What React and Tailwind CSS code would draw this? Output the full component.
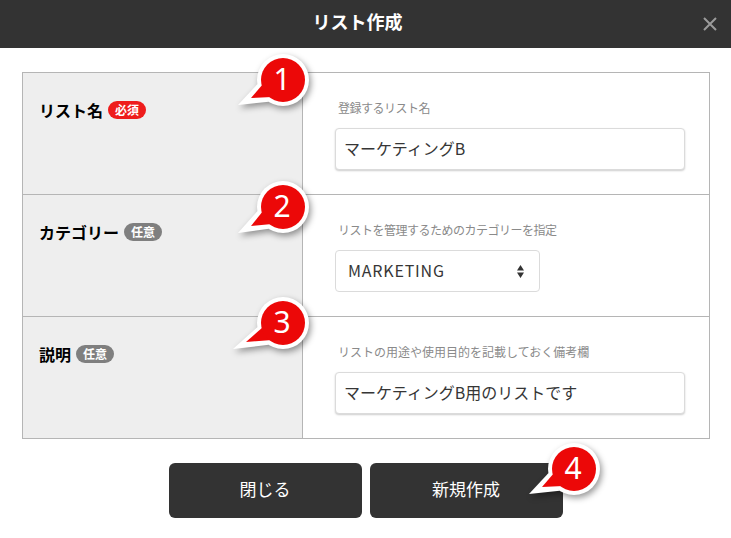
const font = "font-['Noto_Sans_CJK_JP','Noto_Sans',sans-serif]";

function Badge({ children, red }) {
  return (
    <span className={`ml-[5px] inline-flex h-[18px] w-[38px] items-center justify-center rounded-full text-[12px] font-bold leading-none text-white ${red ? "bg-[#ee1c1c]" : "bg-[#7f7f7f]"}`}>
      {children}
    </span>
  );
}

function Callout({ n, cx, cy, tx, ty }) {
  const left = Math.min(cx - 40, tx - 10);
  const top = cy - 40;
  const w = cx + 40 - left;
  const h = Math.max(cy + 40, ty + 15) - top;
  const x = cx - left;
  const y = cy - top;
  const a = tx - left;
  const b = ty - top;
  const tail = (r) => `M${x - r * 0.98} ${y + r * 0.15} L${a} ${b} L${x - r * 0.55} ${y + r * 0.84} Z`;
  return (
    <div className="absolute" style={{ left, top, width: w, height: h }}>
      <svg width={w} height={h} className="absolute inset-0 drop-shadow-[2px_3px_3px_rgba(0,0,0,0.4)]">
        <circle cx={x} cy={y} r={26} fill="#fff" />
        <path d={tail(26)} fill="#fff" />
        <path d={`M${x - 20} ${y + 4} L${a + 13} ${b - 7} L${x - 11} ${y + 17} Z`} fill="#ec0808" />
        <circle cx={x} cy={y} r={22} fill="#ec0808" />
      </svg>
      <span
        className="absolute flex h-[44px] w-[44px] items-center justify-center font-['Noto_Sans','Open_Sans',sans-serif] text-[30px] leading-none text-white"
        style={{ left: x - 23, top: y - 23 }}
      >
        {n}
      </span>
    </div>
  );
}

function Row({ label, badge, red, hint, hintClass, children, last }) {
  return (
    <div className={`flex ${last ? "h-[121px]" : "h-[122px] border-b border-[#b5b5b5]"}`}>
      <div className="flex w-[280px] shrink-0 items-start border-r border-[#b5b5b5] bg-[#eeeeee] pl-[16px] pt-[27px]">
        <div className="flex h-[20px] items-center text-[16px] font-bold leading-none text-black">
          <span>{label}</span>
          <Badge red={red}>{badge}</Badge>
        </div>
      </div>
      <div className="flex-1 pl-[32px] pr-[24px] pt-[27px]">
        <div className={`h-[16px] pl-[3px] text-[12px] leading-[16px] text-[#8a8a8a] ${hintClass}`}>{hint}</div>
        {children}
      </div>
    </div>
  );
}

function TextBox({ value }) {
  return (
    <div className="mt-[12px] flex h-[42px] w-[350px] items-center rounded-[4px] border border-[#dbdbdb] bg-white pb-[2px] pl-[8px] text-[16px] text-[#363636] shadow-[0_1px_2px_rgba(0,0,0,0.2)]">
      {value}
    </div>
  );
}

export default function App() {
  return (
    <div className={`relative h-[538px] w-[731px] overflow-hidden bg-white ${font}`}>
      <header className="relative flex h-[48px] items-center justify-center bg-[#333333] pb-[6px] pr-[16px] text-[18px] font-bold text-white">
        リスト作成
        <svg className="absolute left-[703px] top-[17px]" width="14" height="14" viewBox="0 0 14 14" fill="none" stroke="#9b9b9b" strokeWidth="2">
          <path d="M1 1 L13 13 M13 1 L1 13" />
        </svg>
      </header>

      <main className="px-[22px] pt-[24px]">
        <div className="w-[688px] border border-[#b5b5b5]">
          <Row label="リスト名" badge="必須" red hint="登録するリスト名" hintClass="tracking-[-0.5px]">
            <TextBox value="マーケティングB" />
          </Row>
          <Row label="カテゴリー" badge="任意" hint="リストを管理するためのカテゴリーを指定" hintClass="tracking-[-0.5px]">
            <div className="mt-[12px] flex h-[42px] w-[205px] items-center justify-between rounded-[4px] border border-[#dbdbdb] bg-white pb-[3px] pl-[12px] pr-[15px] text-[16px] tracking-[0.8px] text-[#363636]">
              <span>MARKETING</span>
              <svg className="mt-[3px]" width="7" height="13" viewBox="0 0 7 13" fill="#333">
                <path d="M3.5 0 L7 5.5 L0 5.5 Z M3.5 13 L0 7.5 L7 7.5 Z" />
              </svg>
            </div>
          </Row>
          <Row last label="説明" badge="任意" hint="リストの用途や使用目的を記載しておく備考欄" hintClass="">
            <TextBox value="マーケティングB用のリストです" />
          </Row>
        </div>

        <div className="mt-[24px] flex justify-center gap-[8px]">
          <button className="h-[55px] w-[193px] rounded-[6px] bg-[#333333] pb-[3px] text-[17px] text-white">閉じる</button>
          <button className="h-[55px] w-[193px] rounded-[6px] bg-[#333333] pb-[3px] text-[17px] text-white">新規作成</button>
        </div>
      </main>

      <Callout n="1" cx={283} cy={80} tx={238} ty={105} />
      <Callout n="2" cx={283} cy={207} tx={238} ty={233} />
      <Callout n="3" cx={283} cy={323} tx={233} ty={349} />
      <Callout n="4" cx={574} cy={469} tx={529} ty={494} />
    </div>
  );
}
